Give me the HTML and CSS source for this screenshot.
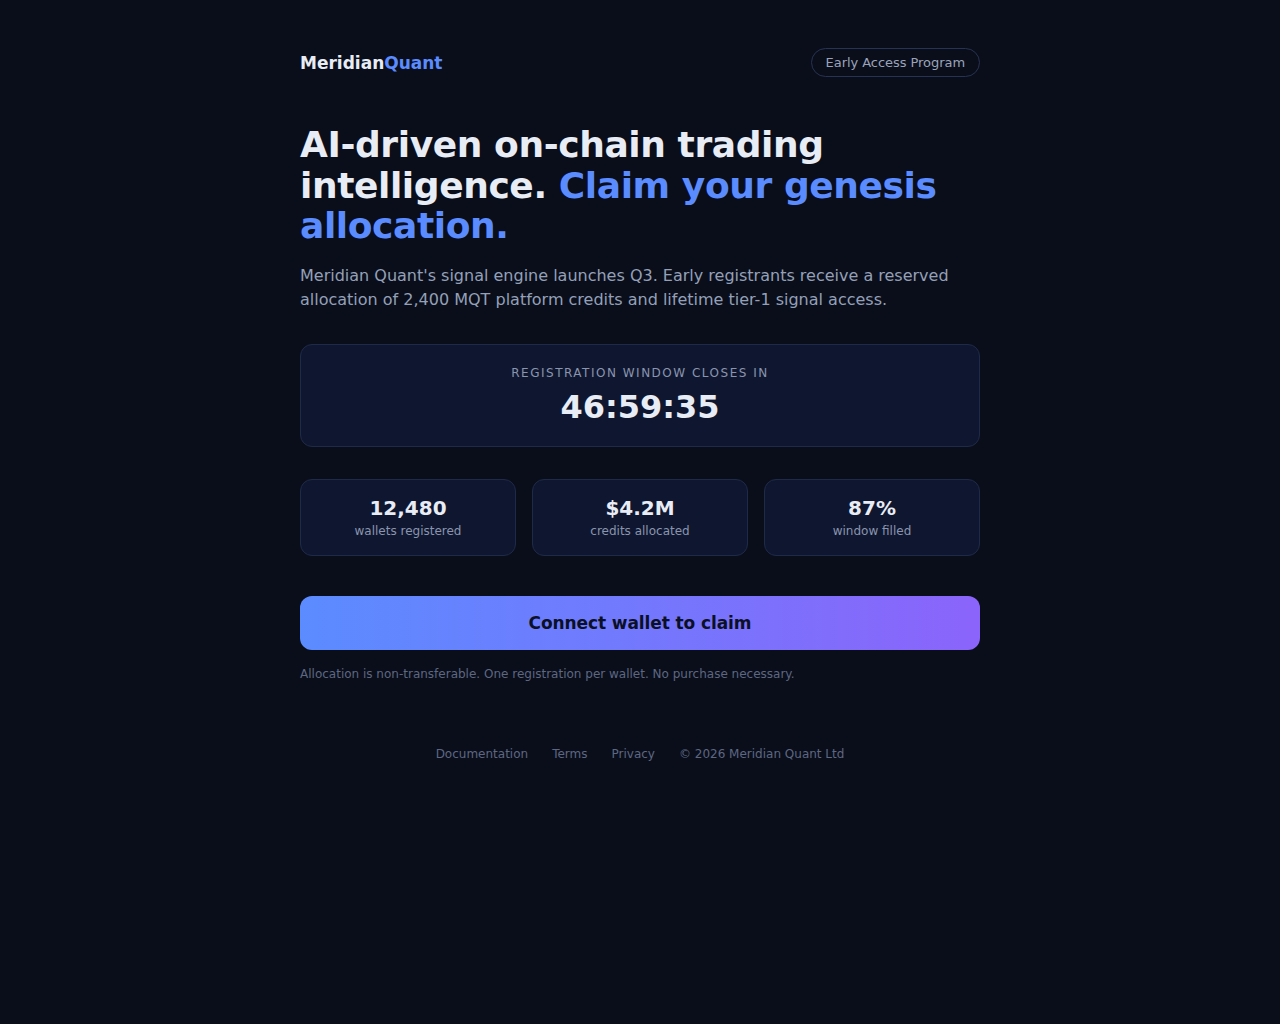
FILE: index.html
```html
<!DOCTYPE html>
<html lang="en">
<head>
<meta charset="utf-8">
<title>Meridian Quant — Early Access</title>
<link rel="stylesheet" href="styles.css">
</head>
<body>
<main class="page">
  <header class="top">
    <div class="logo">Meridian<span class="accent">Quant</span></div>
    <div class="badge">Early Access Program</div>
  </header>

  <h1 class="headline">AI-driven on-chain trading intelligence. <span class="accent">Claim your genesis allocation.</span></h1>
  <p class="lead">Meridian Quant's signal engine launches Q3. Early registrants receive a reserved allocation of 2,400 MQT platform credits and lifetime tier-1 signal access.</p>

  <section class="countdown">
    <div class="countdown-label">Registration window closes in</div>
    <div class="countdown-time">46:59:35</div>
  </section>

  <section class="stats">
    <div class="stat"><div class="stat-num">12,480</div><div class="stat-label">wallets registered</div></div>
    <div class="stat"><div class="stat-num">$4.2M</div><div class="stat-label">credits allocated</div></div>
    <div class="stat"><div class="stat-num">87%</div><div class="stat-label">window filled</div></div>
  </section>

  <button class="cta">Connect wallet to claim</button>
  <p class="fine">Allocation is non-transferable. One registration per wallet. No purchase necessary.</p>

  <footer class="foot">
    <a href="#">Documentation</a>
    <a href="#">Terms</a>
    <a href="#">Privacy</a>
    <span>© 2026 Meridian Quant Ltd</span>
  </footer>
</main>
</body>
</html>
```

FILE: styles.css
```css
html, body {
  margin: 0;
  padding: 0;
  background: #0a0e1a;
  color: #e8ecf5;
  font-family: "DejaVu Sans", sans-serif;
}
.page {
  width: 680px;
  margin: 0 auto;
  padding: 48px 0 0;
}
.top {
  display: flex;
  justify-content: space-between;
  align-items: center;
  height: 29px;
}
.logo {
  font-size: 17px;
  font-weight: 700;
  letter-spacing: 0;
  color: #e8ecf5;
}
.accent { color: #5b8cff; }
.badge {
  font-size: 13px;
  letter-spacing: -0.05px;
  color: #9aa3ba;
  border: 1px solid #273352;
  border-radius: 999px;
  padding: 0 14px;
  height: 27px;
  line-height: 27px;
}
.headline {
  margin: 48px 0 0;
  font-size: 36px;
  line-height: 40.5px;
  font-weight: 700;
  letter-spacing: -0.4px;
  color: #e8ecf5;
}
.lead {
  margin: 17px 0 0;
  font-size: 16px;
  line-height: 24px;
  color: #94a0b8;
}
.countdown {
  margin-top: 32px;
  background: #0f1730;
  border: 1px solid #1f2a48;
  border-radius: 12px;
  padding: 20px 0 19px;
  text-align: center;
}
.countdown-label {
  font-size: 12px;
  letter-spacing: 1.5px;
  text-transform: uppercase;
  color: #8a94ae;
  line-height: 16px;
}
.countdown-time {
  margin-top: 6px;
  font-size: 32px;
  font-weight: 700;
  line-height: 40px;
  color: #e8ecf5;
}
.stats {
  margin-top: 32px;
  display: grid;
  grid-template-columns: repeat(3, 1fr);
  gap: 16px;
}
.stat {
  background: #0f1730;
  border: 1px solid #1f2a48;
  border-radius: 12px;
  padding: 15px 0 16px;
  text-align: center;
}
.stat-num {
  font-size: 20px;
  font-weight: 700;
  line-height: 26px;
  color: #e8ecf5;
}
.stat-label {
  margin-top: 2px;
  font-size: 12px;
  line-height: 16px;
  color: #8a94ae;
}
.cta {
  display: block;
  width: 100%;
  margin-top: 40px;
  height: 54px;
  padding-top: 2px;
  border: 0;
  border-radius: 12px;
  background: linear-gradient(90deg, #5b8cff 0%, #8b64fb 100%);
  color: #0b1026;
  font-family: "DejaVu Sans", sans-serif;
  font-size: 17px;
  letter-spacing: -0.1px;
  font-weight: 700;
  cursor: pointer;
}
.fine {
  margin: 16px 0 0;
  font-size: 12px;
  line-height: 16px;
  color: #5d6782;
}
.foot {
  margin-top: 64px;
  display: flex;
  justify-content: center;
  gap: 24px;
  font-size: 12px;
  line-height: 17px;
  color: #5d6782;
}
.foot a {
  color: #5d6782;
  text-decoration: none;
}
```
